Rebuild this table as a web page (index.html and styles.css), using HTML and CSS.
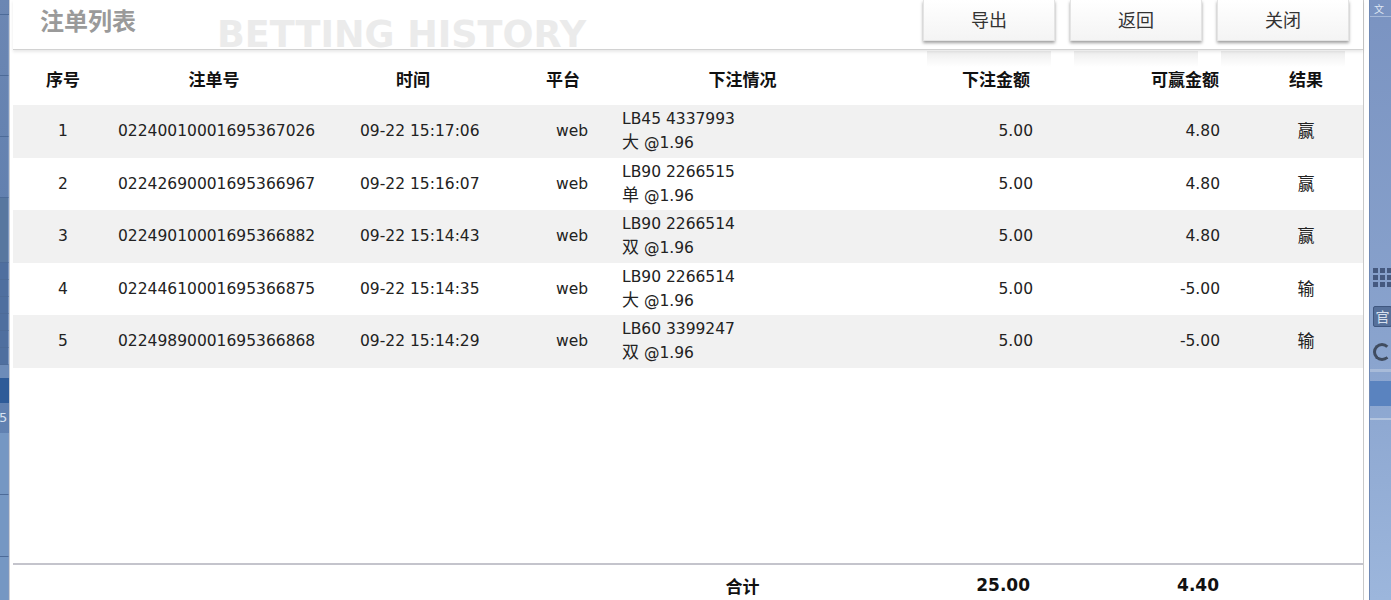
FILE: index.html
```html
<!DOCTYPE html>
<html lang="zh-CN">
<head>
<meta charset="utf-8">
<title>注单列表</title>
<link rel="stylesheet" href="styles.css">
</head>
<body>
<div class="desk">
  <div class="side side-left">
    <div class="ltop"></div>
    <div class="lseg"></div>
    <div class="lseg"></div>
    <div class="lseg"></div>
    <div class="lseg mid"></div>
    <div class="lseg small"></div>
    <div class="lseg small"></div>
    <div class="lseg small"></div>
    <div class="lseg small"></div>
    <div class="lseg small"></div>
    <div class="lseg small"></div>
    <div class="lgap"></div>
    <div class="lband"></div>
    <div class="lnum">5</div>
    <div class="lseg low"></div>
    <div class="lseg low"></div>
    <div class="lseg low"></div>
  </div>

  <div class="dialog">
    <div class="panel">
      <div class="head">
        <h1 class="title">注单列表</h1>
        <span class="watermark">BETTING HISTORY</span>
        <div class="actions">
          <button class="btn">导出</button>
          <button class="btn">返回</button>
          <button class="btn">关闭</button>
        </div>
      </div>

      <div class="row thead">
        <div class="cell c1">序号</div>
        <div class="cell c2">注单号</div>
        <div class="cell c3">时间</div>
        <div class="cell c4">平台</div>
        <div class="cell c5">下注情况</div>
        <div class="cell c6">下注金额</div>
        <div class="cell c7">可赢金额</div>
        <div class="cell c8">结果</div>
      </div>

      <div class="row body alt">
        <div class="cell c1">1</div>
        <div class="cell c2">02240010001695367026</div>
        <div class="cell c3">09-22 15:17:06</div>
        <div class="cell c4">web</div>
        <div class="cell c5"><span>LB45 4337993</span><span><span class="zh">大</span> @1.96</span></div>
        <div class="cell c6">5.00</div>
        <div class="cell c7">4.80</div>
        <div class="cell c8">赢</div>
      </div>
      <div class="row body">
        <div class="cell c1">2</div>
        <div class="cell c2">02242690001695366967</div>
        <div class="cell c3">09-22 15:16:07</div>
        <div class="cell c4">web</div>
        <div class="cell c5"><span>LB90 2266515</span><span><span class="zh">单</span> @1.96</span></div>
        <div class="cell c6">5.00</div>
        <div class="cell c7">4.80</div>
        <div class="cell c8">赢</div>
      </div>
      <div class="row body alt">
        <div class="cell c1">3</div>
        <div class="cell c2">02249010001695366882</div>
        <div class="cell c3">09-22 15:14:43</div>
        <div class="cell c4">web</div>
        <div class="cell c5"><span>LB90 2266514</span><span><span class="zh">双</span> @1.96</span></div>
        <div class="cell c6">5.00</div>
        <div class="cell c7">4.80</div>
        <div class="cell c8">赢</div>
      </div>
      <div class="row body">
        <div class="cell c1">4</div>
        <div class="cell c2">02244610001695366875</div>
        <div class="cell c3">09-22 15:14:35</div>
        <div class="cell c4">web</div>
        <div class="cell c5"><span>LB90 2266514</span><span><span class="zh">大</span> @1.96</span></div>
        <div class="cell c6">5.00</div>
        <div class="cell c7">-5.00</div>
        <div class="cell c8">输</div>
      </div>
      <div class="row body alt">
        <div class="cell c1">5</div>
        <div class="cell c2">02249890001695366868</div>
        <div class="cell c3">09-22 15:14:29</div>
        <div class="cell c4">web</div>
        <div class="cell c5"><span>LB60 3399247</span><span><span class="zh">双</span> @1.96</span></div>
        <div class="cell c6">5.00</div>
        <div class="cell c7">-5.00</div>
        <div class="cell c8">输</div>
      </div>

      <div class="spacer"></div>

      <div class="row tfoot">
        <div class="cell c1"></div>
        <div class="cell c2"></div>
        <div class="cell c3"></div>
        <div class="cell c4"></div>
        <div class="cell c5">合计</div>
        <div class="cell c6">25.00</div>
        <div class="cell c7">4.40</div>
        <div class="cell c8"></div>
      </div>
    </div>
  </div>

  <div class="side side-right">
    <div class="rtop">文</div>
    <div class="rgap1"></div>
    <div class="rgrid">
      <i></i><i></i><i></i><i></i><i></i><i></i><i></i><i></i><i></i>
    </div>
    <div class="rguan">官</div>
    <div class="rcircle"></div>
    <div class="rline"></div>
    <div class="rband"></div>
    <div class="rline2"></div>
    <div class="rrest"></div>
  </div>
</div>
</body>
</html>
```

FILE: styles.css
```css
* { box-sizing: border-box; }

html, body {
  margin: 0;
  padding: 0;
  height: 600px;
  overflow: hidden;
}

body {
  font-family: "DejaVu Sans", "Noto Sans CJK SC", sans-serif;
  background: #7d97c3;
}

.desk {
  display: flex;
  height: 600px;
  overflow: hidden;
}

/* ---------- left desktop strip ---------- */
.side-left {
  width: 9px;
  flex: none;
  display: flex;
  flex-direction: column;
  background: linear-gradient(to bottom, #6c87b3, #5c7cad 330px, #6a8ab8 600px);
}
.ltop {
  height: 15px;
  flex: none;
  border-bottom: 1px solid #4d6b98;
}
.lseg {
  height: 61px;
  flex: none;
  border-bottom: 1px solid #4d6b98;
  border-right: 1px solid #7f98c0;
}
.lseg.mid {
  height: 65px;
  background: #58779f;
}
.lseg.small {
  height: 17px;
  background: #4f6f9f;
}
.lgap {
  height: 13px;
  flex: none;
  background: #6d8cb9;
}
.lband {
  height: 25px;
  flex: none;
  background: #2e5b98;
}
.lnum {
  height: 30px;
  flex: none;
  font: 13px/30px "DejaVu Sans", sans-serif;
  color: #d8e2f0;
  overflow: hidden;
  text-indent: -1px;
}
.lseg.low {
  height: 62px;
  background: #7597c3;
}

/* ---------- dialog ---------- */
.dialog {
  width: 1360px;
  flex: none;
  height: 607px;
  background: #fff;
  border-left: 1px solid #cdd0d6;
  padding-left: 3px;
}

.panel {
  width: 1351px;
  height: 607px;
  display: flex;
  flex-direction: column;
  border-right: 1px solid #c9c9c9;
}

.head {
  position: relative;
  z-index: 1;
  height: 50px;
  flex: none;
  display: flex;
  justify-content: space-between;
  align-items: flex-start;
  border-bottom: 1px solid #d2d2d2;
  box-shadow: 0 2px 3px rgba(0, 0, 0, 0.09);
  background: #fff;
}

.title {
  margin: 0;
  padding-left: 27px;
  font: bold 24px/39px "Noto Sans CJK SC", sans-serif;
  color: #9a9a9a;
  position: relative;
  z-index: 1;
}

.watermark {
  position: absolute;
  left: 204px;
  top: 17px;
  font: bold 36.5px/1 "DejaVu Sans", sans-serif;
  color: #ebebeb;
  white-space: nowrap;
}

.actions {
  display: flex;
  gap: 15px;
  padding-right: 14px;
  position: relative;
  z-index: 1;
}

.btn {
  position: relative;
  width: 132px;
  height: 41px;
  padding: 0 0 3px;
  border: 1px solid #e4e4e4;
  border-top: none;
  background: linear-gradient(to bottom, #ffffff, #f4f4f4);
  box-shadow: 0 2px 3px rgba(0, 0, 0, 0.38);
  font: 18px "Noto Sans CJK SC", sans-serif;
  color: #333;
  cursor: pointer;
}
.btn::after {
  content: "";
  position: absolute;
  left: 3px;
  right: 3px;
  top: 51px;
  height: 16px;
  background: linear-gradient(to bottom, rgba(0, 0, 0, 0.07), rgba(0, 0, 0, 0));
  pointer-events: none;
}

/* ---------- table ---------- */
.row {
  display: grid;
  grid-template-columns: 100px 202px 196px 104px 255px 165px 214px 114px;
  width: 1350px;
  flex: none;
}

.cell {
  display: flex;
  align-items: center;
  white-space: nowrap;
}

.thead {
  height: 55px;
  padding-top: 2px;
  font: bold 17px "Noto Sans CJK SC", sans-serif;
  color: #111;
}

.body {
  height: 52.5px;
  padding-top: 1px;
  font-size: 15.5px;
  line-height: 23px;
  color: #222;
}
.body.alt { background: #f1f1f1; }

.zh { font-size: 17px; }

.c1 { justify-content: center; }
.c2 { padding-left: 5px; }
.c3 { padding-left: 45px; }
.c4 { padding-left: 45px; }
.c5 {
  padding-left: 7px;
  flex-direction: column;
  align-items: flex-start;
  justify-content: center;
}
.c6 { justify-content: flex-end; padding-right: 2px; }
.c7 { justify-content: flex-end; padding-right: 29px; }
.c8 { justify-content: center; font-size: 17px; }

.thead .c2,
.thead .c3,
.thead .c4 { justify-content: center; padding-left: 0; }
.thead .c5,
.tfoot .c5 { align-items: center; padding-left: 0; }
.thead .c6,
.tfoot .c6 { padding-right: 5px; }
.thead .c7,
.tfoot .c7 { padding-right: 30px; }

.spacer { flex: 1; }

.tfoot {
  height: 44px;
  padding-bottom: 2px;
  border-top: 2px solid #c4c4cc;
  font: bold 17px "DejaVu Sans", "Noto Sans CJK SC", sans-serif;
  color: #111;
}

/* ---------- right desktop strip ---------- */
.side-right {
  width: 22px;
  flex: none;
  display: flex;
  flex-direction: column;
  background: linear-gradient(to bottom, #7a93c1, #8aa4ce 360px, #9cb6dc 600px);
  border-left: 1px solid #6f89b5;
}
.rtop {
  height: 17px;
  flex: none;
  padding: 2px 0 0 4px;
  font: 10px/14px "Noto Sans CJK SC", sans-serif;
  color: #dfe7f3;
  border-bottom: 1px solid #a7bad9;
}
.rgap1 { height: 251px; flex: none; }
.rgrid {
  height: 20px;
  flex: none;
  display: grid;
  grid-template-columns: repeat(3, 5px);
  grid-auto-rows: 5px;
  gap: 2px;
  padding-left: 3px;
}
.rgrid i {
  display: block;
  background: #34476b;
  opacity: 0.8;
}
.rguan {
  flex: none;
  margin: 18px 0 0 3px;
  width: 19px;
  height: 21px;
  background: #56709a;
  border: 1px solid #3f577f;
  border-radius: 2px;
  color: #d6e0ef;
  font: 14px/19px "Noto Sans CJK SC", sans-serif;
  text-align: center;
}
.rcircle {
  flex: none;
  margin: 16px 0 0 3px;
  width: 18px;
  height: 18px;
  border: 3px solid #404c60;
  border-right-color: transparent;
  border-radius: 50%;
}
.rline {
  flex: none;
  height: 3px;
  margin-top: 8px;
  background: #a8bbd9;
}
.rband {
  flex: none;
  height: 25px;
  margin-top: 9px;
  background: #5a83bf;
}
.rline2 {
  flex: none;
  height: 2px;
  margin-top: 12px;
  background: #b4c5df;
}
.rrest { flex: 1; }
```
